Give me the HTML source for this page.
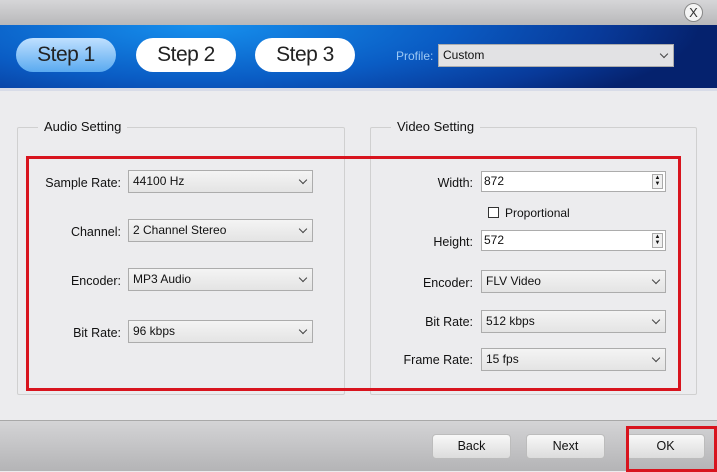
<!DOCTYPE html><html><head><style>
*{margin:0;padding:0;box-sizing:border-box}
body{width:717px;height:471px;position:relative;overflow:hidden;background:#ececee;font-family:"Liberation Sans",sans-serif;font-size:12px;color:#111}
.a{position:absolute}
.top{left:0;top:0;width:717px;height:25px;background:linear-gradient(#d6d6d8,#b8b8ba)}
.band{left:0;top:25px;width:717px;height:63px;background:radial-gradient(ellipse 500px 110px at 200px 0,#1690ee,#0a5cc4 50%,#083a9a 80%,#05226e 100%)}
.line{left:0;top:88px;width:717px;height:3px;background:#d8dce8}
.step{height:34px;width:100px;top:38px;border-radius:17px;background:#fff;font-size:21px;text-align:center;line-height:34px;color:#222;letter-spacing:-0.5px}
.s1{background:linear-gradient(#bfe0ff,#5aaaf0)}
.sel{height:23px;background:linear-gradient(#f4f4f4,#e4e4e4);border:1px solid #acacac;padding-left:4px;line-height:21px;font-size:12px}
.sel:after{content:"";position:absolute;right:6px;top:6px;width:5px;height:5px;border-right:1px solid #444;border-bottom:1px solid #444;transform:rotate(45deg)}
.lbl{text-align:right;font-size:12.5px}
.grp{border:1px solid #d0d0d0;border-radius:2px}
.gt{background:#ececee;padding:0 6px;font-size:13px}
.inp{height:21px;background:#fff;border:1px solid #acacac;padding-left:2px;line-height:19px}
.spin{right:2px;top:2px;width:11px;height:15px;border:1px solid #aaa;background:#f0f0f0;font-size:6px;line-height:6px;text-align:center}
.bot{left:0;top:420px;width:717px;height:51px;background:linear-gradient(#d4d4d6,#b4b4b6);border-top:1px solid #a8a8a8}
.btn{top:434px;width:79px;height:25px;border-radius:4px;border:1px solid #bcbcbc;background:linear-gradient(#f8f8f8,#dcdcdc);text-align:center;line-height:23px;font-size:12.5px}
.red{border:3px solid #d8141e}
</style></head><body>
<div class="a top"></div>
<div class="a" style="left:684px;top:3px;width:19px;height:19px;border-radius:50%;border:1px solid #888;background:#f4f4f4;text-align:center;line-height:17px;font-size:13px;color:#333">X</div>
<div class="a band"></div>
<div class="a line"></div>
<div class="a step s1" style="left:16px">Step 1</div>
<div class="a step" style="left:136px">Step 2</div>
<div class="a step" style="left:255px">Step 3</div>
<div class="a" style="left:396px;top:49px;color:#9cc8f4;font-size:12px">Profile:</div>
<div class="a sel" style="left:438px;top:44px;width:236px;background:#e2e2e4">Custom</div>

<div class="a grp" style="left:17px;top:127px;width:328px;height:268px"></div>
<div class="a gt" style="left:38px;top:119px">Audio Setting</div>
<div class="a grp" style="left:370px;top:127px;width:327px;height:268px"></div>
<div class="a gt" style="left:391px;top:119px">Video Setting</div>

<div class="a lbl" style="left:20px;top:176px;width:101px">Sample Rate:</div>
<div class="a sel" style="left:128px;top:170px;width:185px">44100 Hz</div>
<div class="a lbl" style="left:20px;top:225px;width:101px">Channel:</div>
<div class="a sel" style="left:128px;top:219px;width:185px">2 Channel Stereo</div>
<div class="a lbl" style="left:20px;top:274px;width:101px">Encoder:</div>
<div class="a sel" style="left:128px;top:268px;width:185px">MP3 Audio</div>
<div class="a lbl" style="left:20px;top:326px;width:101px">Bit Rate:</div>
<div class="a sel" style="left:128px;top:320px;width:185px">96 kbps</div>

<div class="a lbl" style="left:372px;top:176px;width:101px">Width:</div>
<div class="a inp" style="left:481px;top:171px;width:185px">872<div class="a spin">▲<br>▼</div></div>
<div class="a" style="left:488px;top:207px;width:11px;height:11px;border:1px solid #333;background:#fff"></div>
<div class="a" style="left:505px;top:206px;font-size:12px">Proportional</div>
<div class="a lbl" style="left:372px;top:235px;width:101px">Height:</div>
<div class="a inp" style="left:481px;top:230px;width:185px">572<div class="a spin">▲<br>▼</div></div>
<div class="a lbl" style="left:372px;top:276px;width:101px">Encoder:</div>
<div class="a sel" style="left:481px;top:270px;width:185px">FLV Video</div>
<div class="a lbl" style="left:372px;top:315px;width:101px">Bit Rate:</div>
<div class="a sel" style="left:481px;top:310px;width:185px">512 kbps</div>
<div class="a lbl" style="left:372px;top:353px;width:101px">Frame Rate:</div>
<div class="a sel" style="left:481px;top:348px;width:185px">15 fps</div>

<div class="a red" style="left:26px;top:156px;width:655px;height:235px"></div>

<div class="a bot"></div>
<div class="a btn" style="left:432px">Back</div>
<div class="a btn" style="left:526px">Next</div>
<div class="a btn" style="left:626px">OK</div>
<div class="a red" style="left:626px;top:426px;width:91px;height:46px"></div>
</body></html>
